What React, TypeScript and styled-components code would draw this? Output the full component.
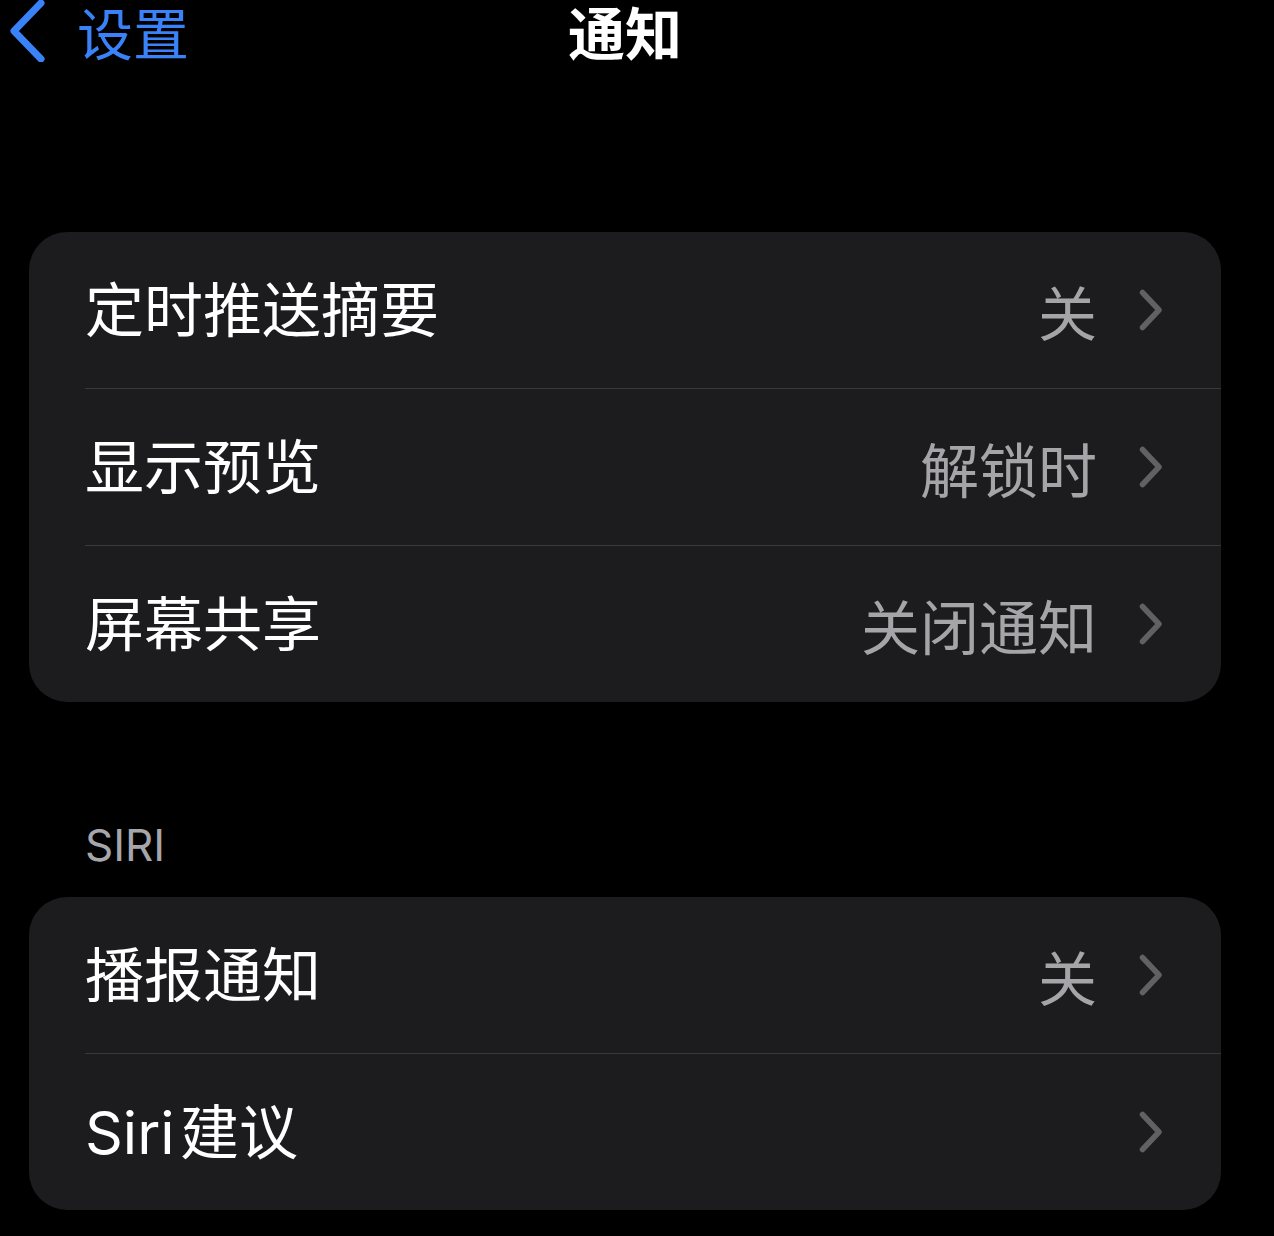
import React from 'react'
import styled, { createGlobalStyle } from 'styled-components'

const GlobalStyle = createGlobalStyle`
    body {
        margin: 0;
        background: #000;
        font-family: Inter, "Noto Sans CJK SC", sans-serif;
        -webkit-font-smoothing: antialiased;
    }
`

const Page = styled.div`
    min-height: 1236px;
    background: #000;
    padding: 0 53px 0 29px;
    box-sizing: border-box;
`

const NavBar = styled.div`
    display: grid;
    grid-template-columns: 1fr auto 1fr;
    align-items: center;
    height: 62px;
    margin-left: -24px;
`

const Back = styled.div`
    display: flex;
    align-items: center;
    gap: 30px;
    color: #3a82f7;
    font-size: 56px;
    line-height: 1.1;
    font-family: "Noto Sans CJK SC", sans-serif;
`

const Title = styled.div`
    color: #fff;
    font-size: 57px;
    font-weight: 700;
    line-height: 1.08;
    font-family: "Noto Sans CJK SC", sans-serif;
    margin-left: 24px;
`

const Card = styled.div<{ $top: number }>`
    margin-top: ${p => p.$top}px;
    background: #1c1c1e;
    border-radius: 38px;
    padding-left: 56px;
    overflow: hidden;
`

const Row = styled.div<{ $first?: boolean }>`
    display: flex;
    align-items: center;
    height: 156px;
    padding-right: 58px;
    border-top: ${p => (p.$first ? 'none' : '1.5px solid #39393c')};
`

const Label = styled.div`
    flex: 1;
    color: #fff;
    font-size: 59px;
    line-height: 1;
`

const Value = styled.div`
    color: #a4a4a9;
    font-size: 59px;
    line-height: 1;
    font-family: "Noto Sans CJK SC", sans-serif;
    margin-right: 42px;
`

const SectionHeader = styled.div`
    margin: 117px 0 26px 56px;
    color: #a6a6aa;
    font-size: 44px;
    line-height: 52px;
`

const Chevron = () => (
    <svg width="24" height="42" viewBox="0 0 24 42">
        <path d="M3.5 3.5 L20 21 L3.5 38.5" fill="none" stroke="#606065" strokeWidth="5.5" strokeLinecap="round" strokeLinejoin="round" />
    </svg>
)

const BackChevron = () => (
    <svg width="42" height="62" viewBox="0 0 42 62">
        <path d="M36 3 L9 31 L36 59" fill="none" stroke="#3a82f7" strokeWidth="7" strokeLinecap="round" strokeLinejoin="round" />
    </svg>
)

type Item = { label: string; value?: string }

const first: Item[] = [
    { label: '定时推送摘要', value: '关' },
    { label: '显示预览', value: '解锁时' },
    { label: '屏幕共享', value: '关闭通知' },
]

const siri: Item[] = [
    { label: '播报通知', value: '关' },
    { label: 'Siri\u200A建议' },
]

const Group = ({ items, top }: { items: Item[]; top: number }) => (
    <Card $top={top}>
        {items.map((it, i) => (
            <Row key={it.label} $first={i === 0}>
                <Label>{it.label}</Label>
                {it.value && <Value>{it.value}</Value>}
                <Chevron />
            </Row>
        ))}
    </Card>
)

export default function App() {
    return (
        <>
            <GlobalStyle />
            <Page>
                <NavBar>
                    <Back>
                        <BackChevron />
                        <span>设置</span>
                    </Back>
                    <Title>通知</Title>
                    <div />
                </NavBar>
                <Group items={first} top={170} />
                <SectionHeader>SIRI</SectionHeader>
                <Group items={siri} top={0} />
            </Page>
        </>
    )
}
